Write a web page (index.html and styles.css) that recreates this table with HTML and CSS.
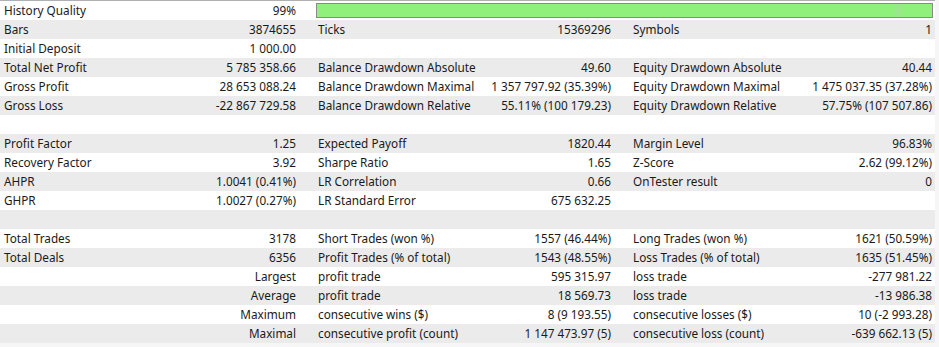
FILE: index.html
```html
<!DOCTYPE html>
<html>
<head>
<meta charset="utf-8">
<link rel="stylesheet" href="styles.css">
</head>
<body>
<div class="report">
  <div class="row">
    <div class="cell c1"><span>History Quality</span><span>99%</span></div>
    <div class="cell bar-cell"><div class="bar"><div class="bar-fill"></div><div class="bar-mark"></div><div class="bar-end"></div></div></div>
  </div>
  <div class="row">
    <div class="cell c1"><span>Bars</span><span>3874655</span></div>
    <div class="cell c2"><span>Ticks</span><span>15369296</span></div>
    <div class="cell c3"><span>Symbols</span><span>1</span></div>
  </div>
  <div class="row">
    <div class="cell c1"><span>Initial Deposit</span><span>1 000.00</span></div>
    <div class="cell c2"></div>
    <div class="cell c3"></div>
  </div>
  <div class="row">
    <div class="cell c1"><span>Total Net Profit</span><span>5 785 358.66</span></div>
    <div class="cell c2"><span>Balance Drawdown Absolute</span><span>49.60</span></div>
    <div class="cell c3"><span>Equity Drawdown Absolute</span><span>40.44</span></div>
  </div>
  <div class="row">
    <div class="cell c1"><span>Gross Profit</span><span>28 653 088.24</span></div>
    <div class="cell c2"><span>Balance Drawdown Maximal</span><span>1 357 797.92 (35.39%)</span></div>
    <div class="cell c3"><span>Equity Drawdown Maximal</span><span>1 475 037.35 (37.28%)</span></div>
  </div>
  <div class="row">
    <div class="cell c1"><span>Gross Loss</span><span>-22 867 729.58</span></div>
    <div class="cell c2"><span>Balance Drawdown Relative</span><span>55.11% (100 179.23)</span></div>
    <div class="cell c3"><span>Equity Drawdown Relative</span><span>57.75% (107 507.86)</span></div>
  </div>
  <div class="row">
    <div class="cell c1"></div><div class="cell c2"></div><div class="cell c3"></div>
  </div>
  <div class="row">
    <div class="cell c1"><span>Profit Factor</span><span>1.25</span></div>
    <div class="cell c2"><span>Expected Payoff</span><span>1820.44</span></div>
    <div class="cell c3"><span>Margin Level</span><span>96.83%</span></div>
  </div>
  <div class="row">
    <div class="cell c1"><span>Recovery Factor</span><span>3.92</span></div>
    <div class="cell c2"><span>Sharpe Ratio</span><span>1.65</span></div>
    <div class="cell c3"><span>Z-Score</span><span>2.62 (99.12%)</span></div>
  </div>
  <div class="row">
    <div class="cell c1"><span>AHPR</span><span>1.0041 (0.41%)</span></div>
    <div class="cell c2"><span>LR Correlation</span><span>0.66</span></div>
    <div class="cell c3"><span>OnTester result</span><span>0</span></div>
  </div>
  <div class="row">
    <div class="cell c1"><span>GHPR</span><span>1.0027 (0.27%)</span></div>
    <div class="cell c2"><span>LR Standard Error</span><span>675 632.25</span></div>
    <div class="cell c3"></div>
  </div>
  <div class="row">
    <div class="cell c1"></div><div class="cell c2"></div><div class="cell c3"></div>
  </div>
  <div class="row">
    <div class="cell c1"><span>Total Trades</span><span>3178</span></div>
    <div class="cell c2"><span>Short Trades (won %)</span><span>1557 (46.44%)</span></div>
    <div class="cell c3"><span>Long Trades (won %)</span><span>1621 (50.59%)</span></div>
  </div>
  <div class="row">
    <div class="cell c1"><span>Total Deals</span><span>6356</span></div>
    <div class="cell c2"><span>Profit Trades (% of total)</span><span>1543 (48.55%)</span></div>
    <div class="cell c3"><span>Loss Trades (% of total)</span><span>1635 (51.45%)</span></div>
  </div>
  <div class="row">
    <div class="cell c1 end"><span>Largest</span></div>
    <div class="cell c2"><span>profit trade</span><span>595 315.97</span></div>
    <div class="cell c3"><span>loss trade</span><span>-277 981.22</span></div>
  </div>
  <div class="row">
    <div class="cell c1 end"><span>Average</span></div>
    <div class="cell c2"><span>profit trade</span><span>18 569.73</span></div>
    <div class="cell c3"><span>loss trade</span><span>-13 986.38</span></div>
  </div>
  <div class="row">
    <div class="cell c1 end"><span>Maximum</span></div>
    <div class="cell c2"><span>consecutive wins ($)</span><span>8 (9 193.55)</span></div>
    <div class="cell c3"><span>consecutive losses ($)</span><span>10 (-2 993.28)</span></div>
  </div>
  <div class="row">
    <div class="cell c1 end"><span>Maximal</span></div>
    <div class="cell c2"><span>consecutive profit (count)</span><span>1 147 473.97 (5)</span></div>
    <div class="cell c3"><span>consecutive loss (count)</span><span>-639 662.13 (5)</span></div>
  </div>
</div>
</body>
</html>
```

FILE: styles.css
```css
html, body {
  margin: 0;
  padding: 0;
  background: #f6f6f6;
}
body {
  font-family: "Noto Sans", "Open Sans", sans-serif;
  font-size: 11.75px;
  color: #1a1a1a;
  width: 939px;
  height: 347px;
  overflow: hidden;
}
.report {
  width: 935px;
  border-top: 1px solid #b0b0b0;
  background: #ffffff;
}
.row {
  display: grid;
  grid-template-columns: 313px 315px 307px;
  height: 19px;
  line-height: 19px;
  background: #ffffff;
}
.row:nth-child(even) {
  background: #ebebeb;
}
.cell {
  display: flex;
  justify-content: space-between;
  white-space: nowrap;
  overflow: hidden;
}
.c1 {
  padding: 0 17px 0 4px;
}
.c2 {
  padding: 0 17px 0 5px;
}
.c3 {
  padding: 0 3px 0 5px;
}
.end {
  justify-content: flex-end;
}
.bar-cell {
  grid-column: 2 / 4;
  padding: 2px 2px 2px 3px;
}
.bar {
  flex: 1;
  display: flex;
  height: 15px;
  border: 1px solid #8a8a8a;
  box-sizing: border-box;
  background: #8ff07c;
}
.bar-fill {
  flex: 1;
}
.bar-mark {
  width: 6px;
  background: #9be88c;
}
.bar-end {
  width: 31px;
}
```
